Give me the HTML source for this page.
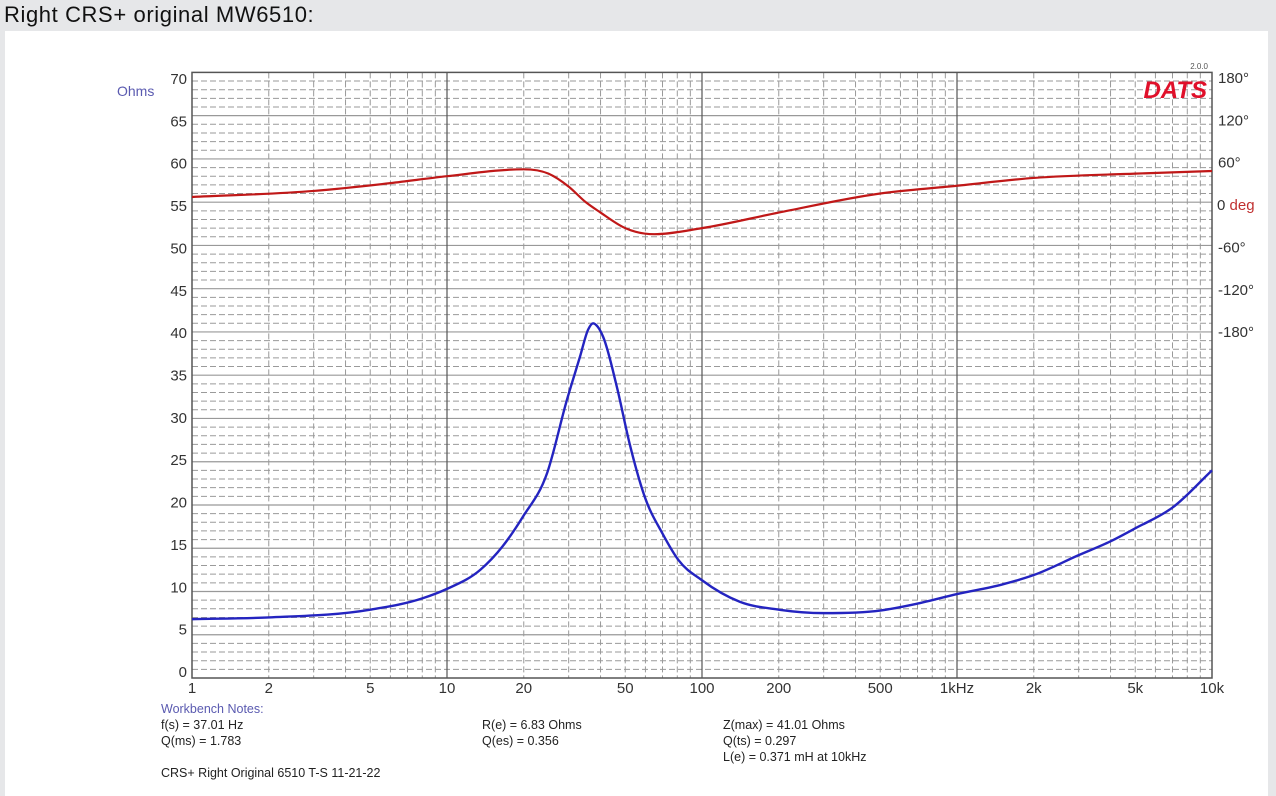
<!DOCTYPE html>
<html><head><meta charset="utf-8"><style>
body{margin:0;width:1276px;height:796px;background:#e6e7e9;font-family:"Liberation Sans",sans-serif;overflow:hidden;position:relative}
.h{position:absolute;left:4px;top:2px;font-size:22px;letter-spacing:0.6px;color:#111}
.p{position:absolute;left:5px;top:31px;width:1263px;height:765px;background:#fff}
svg{position:absolute;left:0;top:0}
.t{position:absolute;font-size:12.5px;color:#222;white-space:nowrap}
</style></head><body>
<div class="h">Right CRS+ original MW6510:</div>
<div class="p"></div>
<svg id="s" width="1276" height="796" font-family="Liberation Sans, sans-serif"></svg>
<div class="t" style="left:161px;top:702px;color:#5a5ab0">Workbench Notes:</div>
<div class="t" style="left:161px;top:718px">f(s) = 37.01 Hz</div>
<div class="t" style="left:161px;top:734px">Q(ms) = 1.783</div>
<div class="t" style="left:482px;top:718px">R(e) = 6.83 Ohms</div>
<div class="t" style="left:482px;top:734px">Q(es) = 0.356</div>
<div class="t" style="left:723px;top:718px">Z(max) = 41.01 Ohms</div>
<div class="t" style="left:723px;top:734px">Q(ts) = 0.297</div>
<div class="t" style="left:723px;top:750px">L(e) = 0.371 mH at 10kHz</div>
<div class="t" style="left:161px;top:766px">CRS+ Right Original 6510 T-S 11-21-22</div>
<script>
const L=192,R=1212,T=72.4,B=678,D=(R-L)/4,pp=(B-T)/70;
const X=f=>L+Math.log10(f)*D, Y=o=>B-o*pp, LY=o=>78+(70-o)/5*42.36;
let h='';
for(let o=1;o<70;o++){if(o%5)h+=`<line x1="${L}" x2="${R}" y1="${Y(o)}" y2="${Y(o)}" stroke="#9a9a9a" stroke-width="1" stroke-dasharray="6,3"/>`;}
for(let d=0;d<4;d++)for(let k=2;k<10;k++){const x=X(k*10**d);h+=`<line x1="${x}" x2="${x}" y1="${T}" y2="${B}" stroke="#9a9a9a" stroke-width="1" stroke-dasharray="6,3"/>`;}
for(let o=5;o<70;o+=5)h+=`<line x1="${L}" x2="${R}" y1="${Y(o)}" y2="${Y(o)}" stroke="#999" stroke-width="1.2"/>`;
for(let d=1;d<4;d++){const x=X(10**d);h+=`<line x1="${x}" x2="${x}" y1="${T}" y2="${B}" stroke="#555" stroke-width="1.2"/>`;}
h+=`<rect x="${L}" y="${T}" width="${R-L}" height="${B-T}" fill="none" stroke="#555" stroke-width="1.5"/>`;
for(let o=0;o<=70;o+=5)h+=`<text x="187" y="${LY(o)+6}" font-size="15" fill="#333" text-anchor="end">${o}</text>`;
[['1',1],['2',2],['5',5],['10',10],['20',20],['50',50],['100',100],['200',200],['500',500],['1kHz',1000],['2k',2000],['5k',5000],['10k',10000]].forEach(([s,f])=>h+=`<text x="${X(f)}" y="693" font-size="15" fill="#333" text-anchor="middle">${s}</text>`);
h+=`<text x="117" y="96" font-size="14" fill="#5a5ab0">Ohms</text>`;
[['180°',70],['120°',65],['60°',60],['-60°',50],['-120°',45],['-180°',40]].forEach(([s,o])=>h+=`<text x="1218" y="${LY(o)+5}" font-size="15" fill="#333">${s}</text>`);
h+=`<text x="1217" y="${LY(55)+5}" font-size="15" fill="#333">0 <tspan fill="#c03030">deg</tspan></text>`;
h+=`<text x="1208" y="69" font-size="8" fill="#555" text-anchor="end">2.0.0</text>`;
h+=`<text x="1207" y="98" font-size="24" font-weight="bold" font-style="italic" fill="#e0102a" text-anchor="end">DATS</text>`;
function path(pts){
 const P=pts.map(([f,o])=>[X(f),Y(o)]),n=P.length,m=[];
 for(let i=0;i<n;i++){
  if(i==0)m.push((P[1][1]-P[0][1])/(P[1][0]-P[0][0]));
  else if(i==n-1)m.push((P[i][1]-P[i-1][1])/(P[i][0]-P[i-1][0]));
  else{const d1=(P[i][1]-P[i-1][1])/(P[i][0]-P[i-1][0]),d2=(P[i+1][1]-P[i][1])/(P[i+1][0]-P[i][0]);
   const h1=P[i][0]-P[i-1][0],h2=P[i+1][0]-P[i][0];
   m.push(d1*d2<=0?0:(d1*h2+d2*h1)/(h1+h2));}
 }
 let d=`M${P[0][0]},${P[0][1]}`;
 for(let i=0;i<n-1;i++){const dx=(P[i+1][0]-P[i][0])/3;
  d+=` C${P[i][0]+dx},${P[i][1]+m[i]*dx} ${P[i+1][0]-dx},${P[i+1][1]-m[i+1]*dx} ${P[i+1][0]},${P[i+1][1]}`;}
 return d;}
const blue=[[1,6.8],[2,7.0],[5,7.9],[8,9.2],[10,10.3],[13.5,12.5],[16.5,15.2],[19.8,18.6],[24.7,23.7],[29.5,32.1],[33.2,37.1],[35.8,40.3],[37.4,41],[39,40.6],[41,39.4],[46.4,33.6],[52,27.1],[59.7,20.9],[70,16.7],[81,13.6],[100,11.3],[141,8.8],[200,7.9],[300,7.5],[500,7.8],[700,8.6],[1000,9.7],[1500,10.8],[2000,11.9],[3000,14.2],[4000,15.8],[5000,17.3],[7000,19.7],[10000,24]];
const red=[[1,55.6],[3,56.3],[6,57.2],[10,58.0],[20,58.8],[25,58.3],[30,56.8],[35,55],[40,53.8],[50,52.0],[65,51.3],[100,52.0],[200,53.8],[500,56],[1000,56.9],[2000,57.8],[5000,58.3],[10000,58.6]];
h+=`<path d="${path(red)}" fill="none" stroke="#c01818" stroke-width="2.2"/>`;
h+=`<path d="${path(blue)}" fill="none" stroke="#2424c0" stroke-width="2.4"/>`;
document.getElementById('s').innerHTML=h;
</script>
</body></html>
